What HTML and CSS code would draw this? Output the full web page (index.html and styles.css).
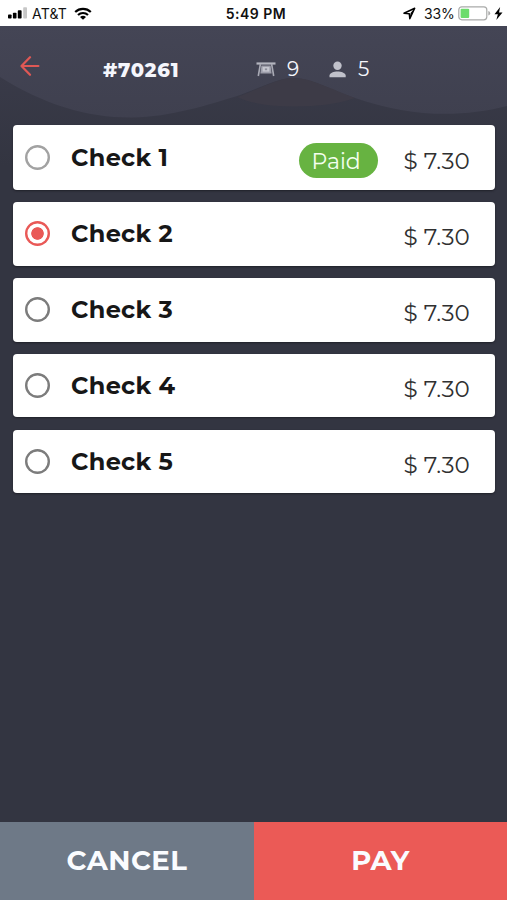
FILE: index.html
```html
<!DOCTYPE html>
<html lang="en">
<head>
<meta charset="utf-8">
<title>Checks</title>
<link rel="stylesheet" href="styles.css">
</head>
<body>
<div class="app">
  <div class="status">
    <div class="status-left">
      <svg class="signal" width="20" height="12" viewBox="0 0 20 12"><rect x="0" y="7.5" width="3.6" height="4" rx=".8"/><rect x="4.9" y="5.8" width="3.6" height="5.7" rx=".8"/><rect x="9.8" y="3.2" width="3.8" height="8.3" rx=".8"/><rect x="15.2" y=".2" width="3.8" height="11.3" rx=".8" fill="#c7c7c7"/></svg>
      <span class="carrier">AT&amp;T</span>
      <svg class="wifi" width="18" height="13" viewBox="0 0 18 13"><g fill="none" stroke="#000" stroke-width="2.2"><path d="M1.2 5A11.3 11.3 0 0 1 16.8 5"/><path d="M4 8A7.3 7.3 0 0 1 14 8"/></g><path d="M6 9.9Q9 7.5 12 9.9L9 12.8Z"/></svg>
    </div>
    <span class="clock">5:49 PM</span>
    <div class="status-right">
      <svg class="location" width="13" height="13" viewBox="0 0 13 13"><path d="M1 6.3 11.7 1.2 6.8 11.7 6.3 6.8Z" fill="none" stroke="#000" stroke-width="1.5" stroke-linejoin="round"/><path d="M7.6 6 11.7 1.2 6.8 11.7Z"/></svg>
      <span class="percent">33%</span>
      <svg class="battery" width="33" height="15" viewBox="0 0 33 15"><rect x=".8" y=".8" width="28" height="13" rx="3" fill="#fff" stroke="#a9aaa9" stroke-width="1.2"/><rect x="2.6" y="2.7" width="8.6" height="9.2" rx="1" fill="#6bdc6b"/><path d="M30.3 5V9.6Q32.2 9 32.2 7.3T30.3 5Z" fill="#aaa"/></svg>
      <svg class="bolt" width="9" height="13" viewBox="0 0 8 12"><path d="M5.5 0 .3 6.6H3.4L2 12 7.7 5.1H4.5Z"/></svg>
    </div>
  </div>
  <div class="screen">
    <svg class="hills" width="507" height="140" viewBox="0 0 507 140">
      <defs><linearGradient id="slope" x1="0" y1="0" x2="0" y2="1"><stop offset="0" stop-color="#393a48"/><stop offset="1" stop-color="#333541"/></linearGradient></defs>
      <path d="M0 51C45 79 88 92 133 91.5C170 91 208 79 240 69C262 61 278 52 293 52C312 52 330 64 355 72C410 91 460 92 507 80V140H0Z" fill="url(#slope)"/>
      <path d="M237 71C262 62 278 52 293 52C312 52 330 63 355 72C330 82 265 85 237 71Z" fill="#3d3b47"/>
    </svg>
    <header class="header">
      <svg class="back" width="20" height="20" viewBox="0 0 20 20"><path d="M10 1.2 1.5 10 10 18.8M1.5 10H18.4" fill="none" stroke="#df5855" stroke-width="2.2" stroke-linecap="round" stroke-linejoin="round"/></svg>
      <h1 class="order">#70261</h1>
      <div class="stat tables">
        <svg width="20" height="15" viewBox="0 0 20 15"><path d="M.5 1.5H19.5" stroke="#b4b5bf" stroke-width="2.2"/><path d="M4.4 2 2.3 14M15.6 2 17.7 14" fill="none" stroke="#a9aab5" stroke-width="1.6"/><path d="M5.4 3.5H14.6L15.6 11.4H4.4Z" fill="#9d9eaa"/><rect x="6.6" y="5" width="6.8" height="4.6" fill="#c5c6cf"/><rect x="8.9" y="6.4" width="2.2" height="1.8" fill="#8c8d99"/></svg>
        <span>9</span>
      </div>
      <div class="stat guests">
        <svg width="18" height="17" viewBox="0 0 18 17"><circle cx="8.5" cy="4.8" r="4.2" fill="#c0c1ca"/><path d="M.5 16.2V14.6C.5 12 5 10.5 8.5 10.5S16.7 12 16.7 14.6V16.2Z" fill="#c0c1ca"/></svg>
        <span>5</span>
      </div>
    </header>
    <main class="checks">
      <label class="check paid"><i class="radio"></i><b class="name">Check 1</b><span class="badge">Paid</span><span class="price">$ 7.30</span></label>
      <label class="check selected"><i class="radio"></i><b class="name">Check 2</b><span class="price">$ 7.30</span></label>
      <label class="check"><i class="radio"></i><b class="name">Check 3</b><span class="price">$ 7.30</span></label>
      <label class="check"><i class="radio"></i><b class="name">Check 4</b><span class="price">$ 7.30</span></label>
      <label class="check"><i class="radio"></i><b class="name">Check 5</b><span class="price">$ 7.30</span></label>
    </main>
    <footer class="actions">
      <button class="cancel">CANCEL</button>
      <button class="pay">PAY</button>
    </footer>
  </div>
</div>
</body>
</html>
```
FILE: styles.css
```css
* { box-sizing: border-box; }
body { margin: 0; font-family: Montserrat, Inter, sans-serif; }
svg { display: block; flex: none; }
.app { width: 507px; height: 900px; display: flex; flex-direction: column; overflow: hidden; }
.status { height: 25.5px; flex: none; display: grid; grid-template-columns: 1fr auto 1fr; align-items: center; padding: 1px 5px 0 8px; background: #fff; color: #111; font-family: Inter, sans-serif; font-size: 14px; }
.status-left, .status-right { display: flex; align-items: center; }
.status-right { justify-content: flex-end; }
.carrier { margin-left: 4px; width: 36px; letter-spacing: .2px; white-space: nowrap; }
.wifi { margin-left: 6px; }
.clock { margin-left: 2px; font-weight: 600; font-size: 14px; letter-spacing: .5px; }
.location { margin-right: 8px; }
.percent { width: 31px; letter-spacing: -.2px; }
.battery { margin: 0 3px 0 3px; }
.bolt { margin-right: -1px; }
.screen { position: relative; flex: 1; display: flex; flex-direction: column; background: linear-gradient(#444555 0, #3f404f 90px, #333541 140px, #333541 100%); }
.hills { position: absolute; top: 0; left: 0; }
.header { position: relative; height: 99.5px; flex: none; display: flex; align-items: flex-start; padding: 30.5px 0 0 20px; color: #f5f6fc; }
.order { margin: 2.5px 0 0 63px; width: 153px; font-size: 19.5px; line-height: 22px; font-weight: 800; letter-spacing: .8px; }
.stat { display: flex; align-items: center; margin-top: 2px; height: 22px; font-size: 20px; line-height: 22px; }
.tables { width: 73px; gap: 11px; }
.guests { gap: 11px; }
.checks { position: relative; display: flex; flex-direction: column; gap: 12.2px; padding: 0 12.5px 0 13px; }
.check { display: flex; align-items: center; height: 63.6px; padding: 0 25px 0 12px; background: #fff; border-radius: 4px; box-shadow: 0 1px 2px #202129; }
.check.paid { height: 65px; }
.radio { width: 25px; height: 25px; flex: none; border-radius: 50%; box-shadow: inset 0 0 0 2.4px #7c7c7c; }
.paid .radio { box-shadow: inset 0 0 0 2.4px #a2a2a2; }
.selected .radio { box-shadow: inset 0 0 0 2.4px #e95957; background: radial-gradient(circle, #e95957 5.9px, transparent 6.6px); }
.name { margin-left: 21px; flex: 1; color: #171717; font-size: 24px; font-weight: 700; letter-spacing: .3px; }
.badge { width: 79px; height: 35px; margin: 6px 26px 0 0; border-radius: 18px; background: #67b341; color: #f4ffef; font-size: 22px; line-height: 37px; padding-left: 13px; letter-spacing: 0; }
.price { width: 66px; margin-top: 6.5px; color: #303030; font-size: 23px; font-weight: 400; letter-spacing: .1px; white-space: nowrap; }
.actions { height: 78px; margin-top: auto; flex: none; display: grid; grid-template-columns: 254px 253px; }
.actions button { border: 0; padding: 0 0 2px; color: #fafcff; font: 700 27.5px Montserrat, Inter, sans-serif; letter-spacing: .5px; }
.cancel { background: #6e7987; }
.pay { background: #eb5a56; }
```
